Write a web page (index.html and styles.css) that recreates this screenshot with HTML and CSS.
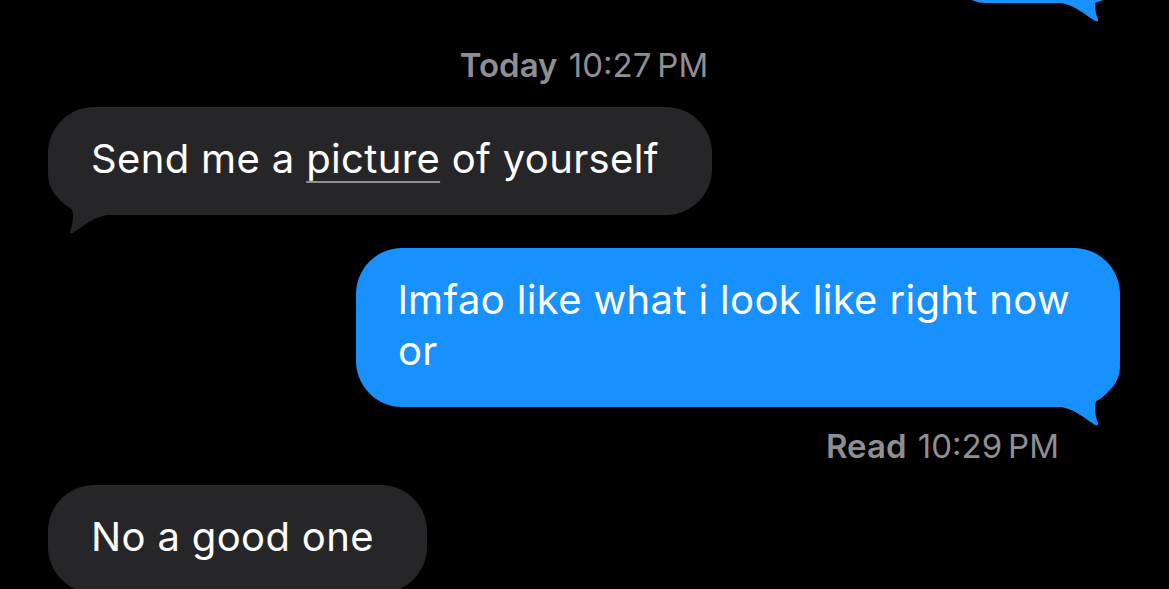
FILE: index.html
```html
<!DOCTYPE html>
<html lang="en">
<head>
<meta charset="utf-8">
<title>Messages</title>
<link rel="stylesheet" href="styles.css">
</head>
<body>
<main class="thread">
  <div class="bubble sent bubble-cut" aria-hidden="true">
    <svg class="tail tail-sent" viewBox="0 0 60 62" width="60" height="62"><path d="M0 0H60C60 14 54 24 42 30C37 33 35 37 35 42C35 48 36 54 38 58C38.5 60 37 61 35.5 60C28 56 14 43 0 42Z"/></svg>
  </div>

  <p class="stamp stamp-center"><b>Today</b> 10:27&#8201;PM</p>

  <div class="bubble received first">
    Send me a <span class="link">picture</span> of yourself
    <svg class="tail tail-received" viewBox="0 0 60 62" width="60" height="62"><path d="M0 0H60C60 14 54 24 42 30C37 33 35 37 35 42C35 48 36 54 38 58C38.5 60 37 61 35.5 60C28 56 14 43 0 42Z"/></svg>
  </div>

  <div class="bubble sent wide">
    lmfao like what i look like right now or
    <svg class="tail tail-sent" viewBox="0 0 60 62" width="60" height="62"><path d="M0 0H60C60 14 54 24 42 30C37 33 35 37 35 42C35 48 36 54 38 58C38.5 60 37 61 35.5 60C28 56 14 43 0 42Z"/></svg>
  </div>

  <p class="stamp stamp-read"><b>Read</b> 10:29&#8201;PM</p>

  <div class="bubble received last">No a good one</div>
</main>
</body>
</html>
```

FILE: styles.css
```css
* {
  box-sizing: border-box;
}

html,
body {
  margin: 0;
  height: 100%;
  background: #000;
  overflow: hidden;
}

body {
  font-family: Inter, "Liberation Sans", sans-serif;
  color: #fff;
}

.thread {
  display: flex;
  flex-direction: column;
  padding: 0 49px 0 48px;
}

.bubble {
  position: relative;
  font-size: 40px;
  line-height: 51px;
  letter-spacing: 0.35px;
  padding: 26px 54px 31px 43px;
  border-radius: 46px;
  width: fit-content;
}

.bubble.received {
  align-self: flex-start;
  background: #262628;
  padding-right: 53px;
}

.bubble.sent {
  align-self: flex-end;
  background: #1890fe;
  padding: 26px 53px 31px 42px;
}

.bubble.sent .tail path {
  fill: #1890fe;
}

.bubble.received .tail path {
  fill: #262628;
}

.bubble-cut {
  width: 165px;
  height: 60px;
  margin-top: -57px;
  padding: 0;
}

.bubble.sent.wide {
  width: 764px;
  margin-top: 33px;
  padding-right: 40px;
}

.tail {
  position: absolute;
  bottom: -20px;
  display: block;
}

.tail-sent {
  right: 0;
}

.tail-received {
  left: 0;
  transform: scaleX(-1);
}

.link {
  text-decoration: underline;
  text-decoration-color: #8e8e93;
  text-decoration-thickness: 2px;
  text-underline-offset: 8px;
}

.stamp {
  margin: 0;
  font-size: 33px;
  line-height: 38px;
  color: #8e8e93;
}

.stamp b {
  font-weight: 600;
  margin-right: 2px;
}

.stamp-center {
  text-align: center;
  margin: 43px 0 23px;
}

.stamp-read {
  align-self: flex-end;
  margin: 20px 61px 20px 0;
}

.last {
  padding-right: 56px;
}
```
